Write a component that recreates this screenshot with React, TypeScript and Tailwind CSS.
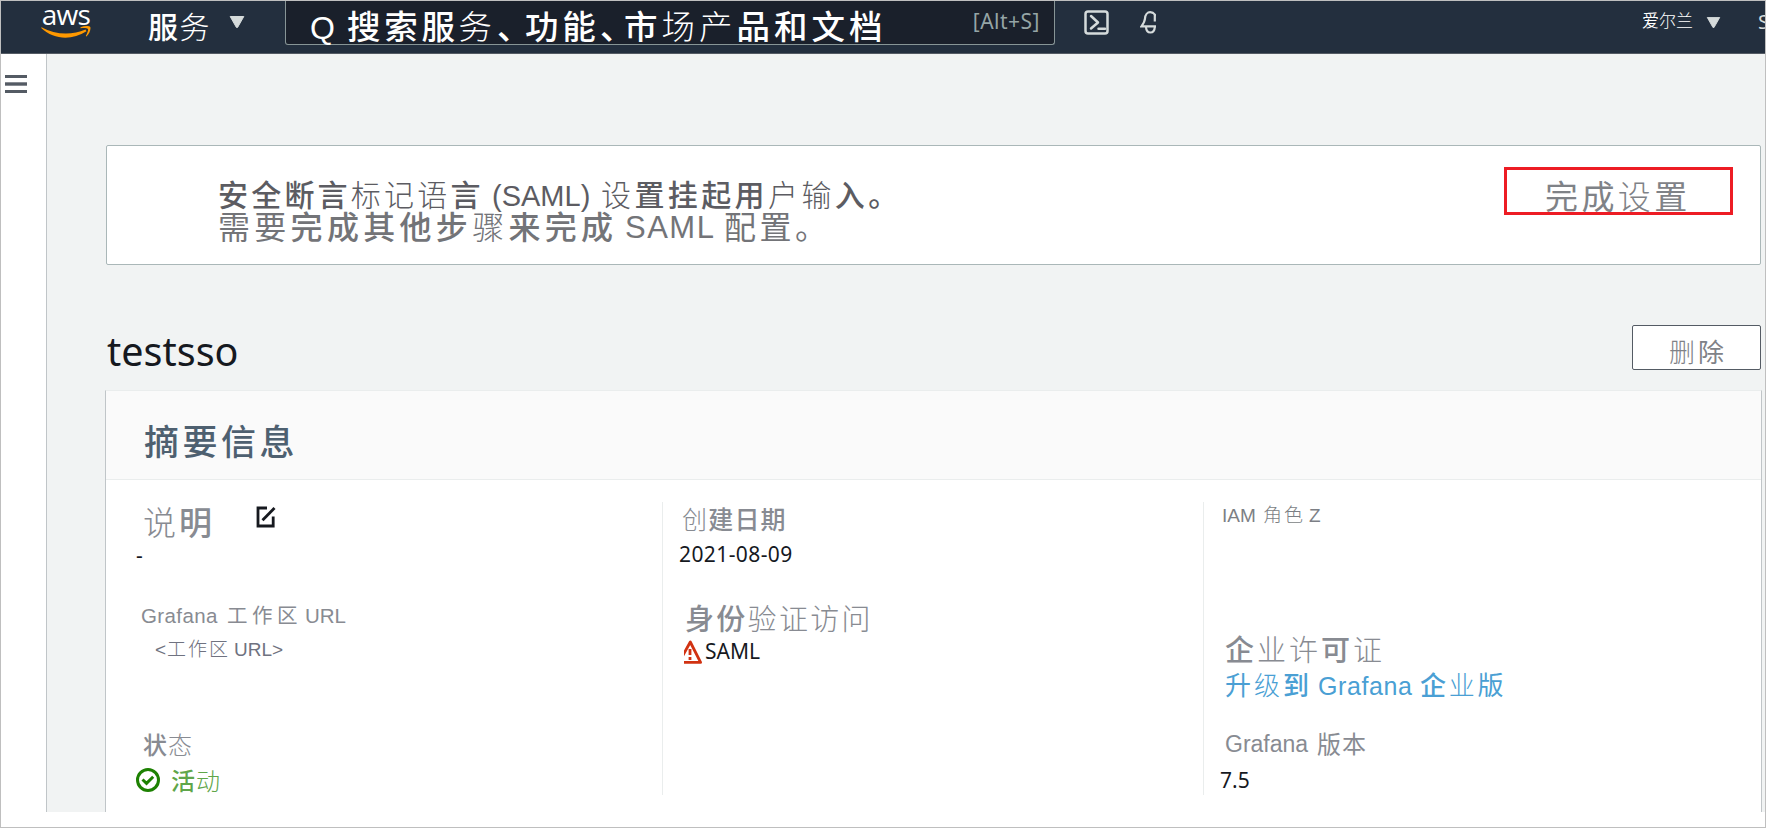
import type { ReactNode } from "react";

const cjk = "font-['Liberation_Sans','Noto_Sans_CJK_SC',sans-serif]";
const latin = "font-['Noto_Sans',sans-serif]";

function Thin({ children }: { children: ReactNode }) {
  return <span className="font-light">{children}</span>;
}

function AwsLogo() {
  return (
    <div className="flex w-[50px] flex-col items-center">
      <span className="font-['Open_Sans',sans-serif] h-[20px] text-[28px] leading-[18px] font-medium tracking-[-0.7px] text-white">aws</span>
      <svg width="50" height="13" viewBox="0 0 50 13" className="mt-[1px]">
        <path d="M0.5 1.2C14 9 31 9.5 44.5 3.6L45.5 5.2C31 14.6 13 14 0.2 2Z" fill="#f90" />
        <path d="M39.5 1.2C43.5-0.2 48.3-0.2 49.3 1C50 3.5 48.5 8 45.5 10.4L44.8 10C46.3 7.3 47.6 4 46.9 2.9C46 1.9 42.5 2 39.6 2.2Z" fill="#f90" />
      </svg>
    </div>
  );
}

function Caret({ className = "" }: { className?: string }) {
  return (
    <svg viewBox="0 0 16 12" className={className}>
      <path d="M1.2 0.5H14.8L8.6 11.4H7.4Z" fill="#d5dbdb" stroke="#d5dbdb" strokeLinejoin="round" />
    </svg>
  );
}

function TopBar() {
  return (
    <header className="flex h-[53px] shrink-0 border-b border-[#545b64] bg-[#232f3e] text-white">
      <div className="ml-[40px] pt-[4px]"><AwsLogo /></div>
      <div className="ml-[57px] w-[64px] pt-[10px] text-[30px] leading-[34px] font-medium tracking-[1.5px] whitespace-nowrap">
        服<Thin>务</Thin>
      </div>
      <Caret className="mt-[15px] ml-[17px] h-[12px] w-[16px]" />
      <div className="ml-[40px] flex h-[44px] w-[770px] rounded-b-[3px] border border-t-0 border-[#879596] bg-[#1a202b]">
        <div className="ml-[24px] flex pt-[10px] text-[33.5px] leading-[34px] font-medium whitespace-nowrap">
          <span className="w-[37px] text-[32px]">Q</span>
          <span className="w-[150px] tracking-[3.7px]">搜索服<Thin>务</Thin></span>
          <span className="w-[28px] tracking-[-5.5px]">、</span>
          <span className="w-[75px] tracking-[3.7px]">功能</span>
          <span className="w-[24px] tracking-[-9.5px]">、</span>
          <span className="tracking-[4px]">市<Thin>场产</Thin>品和文档</span>
        </div>
        <span className={`${latin} mt-[8px] mr-[14px] ml-auto text-[21px] leading-[25px] tracking-[0.5px] text-[#95a5a6]`}>[Alt+S]</span>
      </div>
      <svg width="25" height="25" viewBox="0 0 25 25" className="mt-[9px] ml-[29px]" fill="none" stroke="#d5dbdb" strokeWidth="2.5" strokeLinecap="round" strokeLinejoin="round">
        <rect x="1.5" y="1.5" width="22" height="22" rx="2.5" />
        <path d="M7 6L14 12.5L7 18.5M14.5 18.7H21" />
      </svg>
      <svg width="16" height="23" viewBox="0 0 16 23" className="mt-[10px] ml-[31px]" fill="none" stroke="#d5dbdb" strokeWidth="2.2">
        <path d="M16 5C14.2 2.2 12.2 1.2 10.2 1.2C7.5 1.2 5.2 3.8 5 7.5C4.8 10.5 3.6 12.2 1.5 15.3H16" />
        <path d="M14.8 4V10.5M6 16C6.2 19.7 7.2 21.5 10.4 21.5C13.6 21.5 14.6 19.7 14.8 16" />
      </svg>
      <span className="mt-[11px] ml-auto text-[17px] leading-[20px] whitespace-nowrap">爱<span className="font-light">尔兰</span></span>
      <Caret className="mt-[16px] ml-[13px] h-[11px] w-[15px]" />
      <span className={`${latin} mt-[7px] ml-[37px] w-[7px] overflow-hidden text-[20px] leading-[28px] text-[#d5dbdb]`}>S</span>
    </header>
  );
}

function SetupAlert() {
  return (
    <section className="mt-[91px] flex h-[120px] rounded-[2px] border border-[#aab7b8] bg-white">
      <div className="ml-[111px] pt-[34px] whitespace-nowrap">
        <p className="flex h-[32px] text-[30px] leading-[32px] font-medium text-[#5c5c62]">
          <span className="w-[274px] tracking-[3.2px]">安全断言<Thin>标记语</Thin>言</span>
          <span className="w-[109px] text-[29px]">(SAML)</span>
          <span className="tracking-[3.4px]"><Thin>设</Thin>置挂起用<Thin>户输</Thin>入。</span>
        </p>
        <p className="flex h-[32px] text-[32px] leading-[32px] text-[#737478]">
          <span className="w-[407px] font-medium tracking-[4.3px]"><span className="font-normal">需要</span>完成其他步<Thin>骤</Thin>来完成</span>
          <span className="w-[99px] text-[31px] tracking-[1.5px]">SAML</span>
          <span className="tracking-[3.5px]">配置。</span>
        </p>
      </div>
      <button className="mt-[21px] mr-[27px] ml-auto h-[48px] w-[229px] border-3 border-[#ed1c24] pl-[38px] text-left text-[33px] leading-[55px] tracking-[3.4px] text-[#7f8287]">
        完成<Thin>设</Thin>置
      </button>
    </section>
  );
}

function EditIcon() {
  return (
    <svg width="20" height="22" viewBox="0 0 20 22" fill="none" stroke="#16191f" strokeWidth="2.8" className="mt-[4px] ml-[42px]">
      <path d="M11 2H2V20H17.2V10.5" />
      <path d="M6.5 14.2L18.5 2" />
    </svg>
  );
}

function WarningIcon() {
  return (
    <svg width="18" height="24" viewBox="0 0 18 24" className="mt-[2px]">
      <path d="M-5 22.4H16.6L6.3 2Z" fill="none" stroke="#d13212" strokeWidth="2.8" strokeLinejoin="round" />
      <path d="M6 9V15M6 17V20" stroke="#d13212" strokeWidth="2.8" />
    </svg>
  );
}

function CheckIcon() {
  return (
    <svg width="24" height="24" viewBox="0 0 24 24" fill="none" stroke="#1d8102" strokeWidth="3" className="mt-[1px]">
      <circle cx="12" cy="12" r="10.5" />
      <path d="M6.5 11.5L10.5 15.3L17.2 8.7" />
    </svg>
  );
}

function Summary() {
  return (
    <section className="mt-[20px] mr-[-1px] ml-[-1px] flex flex-1 flex-col border-t border-r border-l border-t-[#eaeded] border-r-[#c0c5c8] border-l-[#c0c5c8] bg-white">
      <h2 className="h-[89px] border-b border-[#eaeded] bg-[#fafafa] pt-[32px] pl-[38px] text-[35px] leading-[40px] font-medium tracking-[3.5px] text-[#4e6070]">
        摘要信息
      </h2>
      <div className="mt-[22px] flex h-[293px] whitespace-nowrap text-[#888b92]">
        <div className="w-[556px]">
          <div className="flex h-[44px] text-[33px] leading-[44px] font-medium">
            <span className="ml-[37px] w-[71px] tracking-[3px]"><Thin>说</Thin>明</span>
            <EditIcon />
          </div>
          <div className={`${latin} ml-[30px] h-[20px] text-[21px] leading-[18px] text-[#16191f]`}>-</div>
          <div className="mt-[38px] ml-[35px] flex h-[22px] text-[20.5px] leading-[24px]">
            <span className="w-[86px] tracking-[0.4px]">Grafana</span>
            <span className="w-[78px] tracking-[4.5px]">工作区</span>
            <span>URL</span>
          </div>
          <div className="mt-[12px] ml-[49px] flex h-[22px] text-[19px] leading-[24px] text-[#6f7280]">
            <span className="w-[12px]">&lt;</span>
            <span className="w-[67px] font-light tracking-[2px]">工作区</span>
            <span>URL&gt;</span>
          </div>
          <div className="mt-[74px] ml-[37px] h-[24px] text-[24px] leading-[24px] font-medium tracking-[1px]">状<Thin>态</Thin></div>
          <div className="mt-[9px] ml-[30px] flex h-[28px] text-[24px] leading-[30px] font-medium tracking-[1px] text-[#5fa64a]">
            <CheckIcon />
            <span className="ml-[11px]">活<Thin>动</Thin></span>
          </div>
        </div>
        <div className="w-[541px] border-l border-[#eaeded] pl-[16px]">
          <div className="ml-[3px] h-[36px] text-[25px] leading-[37px] font-medium tracking-[1.2px]"><Thin>创</Thin>建日期</div>
          <div className={`${latin} mt-[2px] h-[30px] text-[21px] leading-[29px] tracking-[0.4px] text-[#16191f]`}>2021-08-09</div>
          <div className="mt-[33px] ml-[6px] h-[32px] text-[29px] leading-[34px] font-medium tracking-[2.3px]">身份<Thin>验证访问</Thin></div>
          <div className="mt-[3px] ml-[5px] flex h-[28px]">
            <WarningIcon />
            <span className={`${latin} ml-[3px] text-[21px] leading-[27px] text-[#16191f]`}>SAML</span>
          </div>
        </div>
        <div className="flex-1 border-l border-[#eaeded] pl-[17px]">
          <div className="ml-[1px] flex h-[26px] text-[19px] leading-[27px] text-[#7c7f85]">
            <span className="w-[41px]">IAM</span>
            <span className="w-[46px] font-light tracking-[2px]">角色</span>
            <span>Z</span>
          </div>
          <div className="mt-[106px] ml-[4px] h-[32px] text-[29px] leading-[34px] font-medium tracking-[3px]">企<Thin>业许</Thin>可<Thin>证</Thin></div>
          <div className="mt-[4px] ml-[4px] flex h-[32px] text-[26px] leading-[33px] text-[#4a9fd4]">
            <span className="w-[93px] tracking-[3px]">升<Thin>级</Thin><span className="font-medium">到</span></span>
            <span className="w-[102px] text-[25px] tracking-[0.6px]">Grafana</span>
            <span className="tracking-[2.7px]"><span className="font-medium">企</span><Thin>业</Thin>版</span>
          </div>
          <div className="mt-[28px] ml-[4px] flex h-[28px] text-[24px] leading-[29px]">
            <span className="w-[92px] text-[23px]">Grafana</span>
            <span className="tracking-[1px]">版本</span>
          </div>
          <div className={`${latin} mt-[8px] ml-[-1px] h-[28px] text-[21px] leading-[28px] text-[#16191f]`}>7.5</div>
        </div>
      </div>
    </section>
  );
}

export default function App() {
  return (
    <div lang="zh-CN" className={`${cjk} flex h-[828px] w-[1766px] flex-col overflow-hidden border border-[#bfbfbf] bg-white`}>
      <TopBar />
      <div className="flex h-[758px]">
        <aside className="w-[46px] shrink-0 border-r border-[#c0c5c8] bg-white pt-[21px] pl-[4px]">
          <svg width="22" height="18" viewBox="0 0 22 18" className="block" fill="#545b64">
            <rect width="22" height="3" />
            <rect y="7.3" width="22" height="3.4" />
            <rect y="15" width="22" height="3" />
          </svg>
        </aside>
        <main className="flex flex-1 flex-col bg-[#f1f3f3] pr-[4px] pl-[59px]">
          <SetupAlert />
          <div className="mt-[60px] flex h-[45px]">
            <h1 className={`${latin} ml-[1px] text-[39.5px] leading-[53px] text-[#16191f]`}>testsso</h1>
            <button className="ml-auto w-[129px] rounded-[2px] border border-[#545b64] bg-white pl-[36px] text-left text-[26px] leading-[54px] font-medium tracking-[3px] text-[#7f8287]">
              <Thin>删</Thin><span className="font-normal">除</span>
            </button>
          </div>
          <Summary />
        </main>
      </div>
    </div>
  );
}
